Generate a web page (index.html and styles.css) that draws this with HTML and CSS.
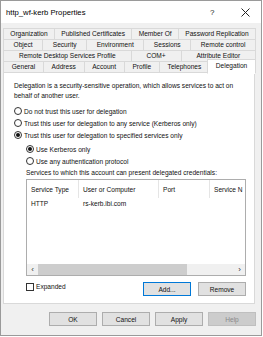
FILE: index.html
```html
<!DOCTYPE html>
<html>
<head>
<meta charset="utf-8">
<link rel="stylesheet" href="styles.css">
</head>
<body>
<div class="window">
  <div class="titlebar">
    <span class="title">http_wf-kerb Properties</span>
    <span class="tb-help">?</span>
    <span class="tb-close">
      <svg width="9" height="9" viewBox="0 0 9 9"><path d="M0.5 0.5L8.5 8.5M8.5 0.5L0.5 8.5" stroke="#222" stroke-width="1"/></svg>
    </span>
  </div>
  <div class="client">
    <div class="tabs">
      <div class="tabrow">
        <div class="tab">Organization</div>
        <div class="tab">Published Certificates</div>
        <div class="tab">Member Of</div>
        <div class="tab">Password Replication</div>
      </div>
      <div class="tabrow">
        <div class="tab">Object</div>
        <div class="tab">Security</div>
        <div class="tab">Environment</div>
        <div class="tab">Sessions</div>
        <div class="tab">Remote control</div>
      </div>
      <div class="tabrow">
        <div class="tab">Remote Desktop Services Profile</div>
        <div class="tab">COM+</div>
        <div class="tab">Attribute Editor</div>
      </div>
      <div class="tabrow last">
        <div class="tab">General</div>
        <div class="tab">Address</div>
        <div class="tab">Account</div>
        <div class="tab">Profile</div>
        <div class="tab">Telephones</div>
        <div class="tab selected">Delegation</div>
      </div>
    </div>
    <div class="panel">
      <p class="intro">Delegation is a security-sensitive operation, which allows services to act on behalf of another user.</p>
      <div class="radios">
        <div class="radio"><span class="rb"></span>Do not trust this user for delegation</div>
        <div class="radio"><span class="rb"></span>Trust this user for delegation to any service (Kerberos only)</div>
        <div class="radio"><span class="rb on"></span>Trust this user for delegation to specified services only</div>
      </div>
      <div class="sub">
        <div class="radios">
          <div class="radio"><span class="rb on"></span>Use Kerberos only</div>
          <div class="radio"><span class="rb"></span>Use any authentication protocol</div>
        </div>
        <div class="label">Services to which this account can present delegated credentials:</div>
        <div class="listbox">
          <div class="lhead">
            <div class="c1">Service Type</div>
            <div class="c2">User or Computer</div>
            <div class="c3">Port</div>
            <div class="c4">Service N</div>
          </div>
          <div class="lrow">
            <div class="c1">HTTP</div>
            <div class="c2">rs-kerb.ibi.com</div>
            <div class="c3"></div>
            <div class="c4"></div>
          </div>
          <div class="lspace"></div>
          <div class="hscroll">
            <span class="arr">&lsaquo;</span>
            <div class="track"><div class="thumb"></div></div>
            <span class="arr">&rsaquo;</span>
          </div>
        </div>
        <div class="below">
          <div class="check"><span class="cb"></span>Expanded</div>
          <div class="btns">
            <div class="btn default">Add...</div>
            <div class="btn">Remove</div>
          </div>
        </div>
      </div>
    </div>
    <div class="footer">
      <div class="btn">OK</div>
      <div class="btn">Cancel</div>
      <div class="btn">Apply</div>
      <div class="btn disabled">Help</div>
    </div>
  </div>
</div>
</body>
</html>
```

FILE: styles.css
```css
* { box-sizing: border-box; }
html, body { margin: 0; padding: 0; background: #fff; }
body {
  font-family: "Liberation Sans", Arial, sans-serif;
  font-size: 6.6px;
  color: #111;
  width: 263px;
  height: 337px;
  overflow: hidden;
}
.window {
  width: 262px;
  height: 336px;
  border: 1px solid #9a9a9a;
  background: #f0f0f0;
  display: flex;
  flex-direction: column;
}
.titlebar {
  height: 22px;
  background: #fff;
  display: flex;
  align-items: center;
  padding-left: 5px;
  flex: none;
}
.title { font-size: 7.7px; color: #000; flex: 1; }
.tb-help { font-size: 8px; width: 10px; margin-right: 21px; color: #222; }
.tb-close { width: 9px; height: 9px; margin-right: 11px; display: flex; }
.client {
  flex: 1;
  padding: 5px 6px 0 2px;
  display: flex;
  flex-direction: column;
}
.tabs { display: flex; flex-direction: column; }
.tabrow {
  display: flex;
  height: 12px;
  margin-bottom: -1px;
}
.tab {
  flex: 1 1 auto;
  border: 1px solid #d9d9d9;
  margin-right: -1px;
  background: #f0f0f0;
  text-align: center;
  line-height: 10px;
  white-space: nowrap;
  padding: 0 3px;
}
.tab.selected {
  background: #fff;
  border-bottom-color: #fff;
  margin: -2px -1px 0 -2px;
  height: 15px;
  position: relative;
  z-index: 2;
  line-height: 12px;
}
.panel {
  background: #fff;
  border: 1px solid #d9d9d9;
  height: 232px;
  padding: 8px 0 0 10px;
  flex: none;
}
.intro {
  margin: 0;
  line-height: 10px;
  width: 236px;
}
.radios { display: flex; flex-direction: column; }
.panel > .radios { margin-top: 4px; }
.radio {
  height: 12px;
  display: flex;
  align-items: center;
  white-space: nowrap;
}
.rb {
  width: 8px;
  height: 8px;
  border: 1px solid #333;
  border-radius: 50%;
  margin-right: 2px;
  display: flex;
  align-items: center;
  justify-content: center;
  flex: none;
}
.rb.on::after {
  content: "";
  width: 4px;
  height: 4px;
  border-radius: 50%;
  background: #111;
}
.sub { padding-left: 12px; margin-top: 2px; }
.label { height: 12px; line-height: 12px; white-space: nowrap; }
.listbox {
  width: 220px;
  height: 97px;
  border: 1px solid #adadad;
  display: flex;
  flex-direction: column;
}
.lhead, .lrow { display: flex; flex: none; }
.lhead { height: 18px; align-items: stretch; }
.lhead > div {
  border-right: 1px solid #e5e5e5;
  padding: 0 0 0 4px;
  display: flex;
  align-items: center;
  white-space: nowrap;
  overflow: hidden;
}
.lrow { height: 10px; align-items: center; }
.lrow > div { padding-left: 4px; white-space: nowrap; }
.c1 { width: 52px; }
.c2 { width: 80px; }
.c3 { width: 51px; }
.c4 { flex: 1; }
.lhead > .c4 { border-right: none; }
.lspace { flex: 1; }
.hscroll {
  height: 11px;
  background: #f0f0f0;
  display: flex;
  align-items: center;
  flex: none;
}
.arr { width: 11px; text-align: center; font-size: 8px; line-height: 11px; color: #333; }
.track { flex: 1; height: 100%; display: flex; }
.thumb { width: 149px; height: 100%; background: #cdcdcd; }
.below {
  display: flex;
  justify-content: space-between;
  align-items: flex-start;
  margin-top: 6px;
  width: 220px;
}
.check { display: flex; align-items: center; height: 9px; }
.cb {
  width: 8px;
  height: 8px;
  border: 1px solid #333;
  background: #fff;
  margin-right: 2px;
}
.btns { display: flex; gap: 7px; }
.btn {
  width: 48px;
  height: 14px;
  border: 1px solid #adadad;
  background: #e1e1e1;
  display: flex;
  align-items: center;
  justify-content: center;
}
.btn.default { border-color: #0078d7; }
.btn.disabled { background: #cccccc; border-color: #bfbfbf; color: #8a8a8a; }
.footer {
  display: flex;
  justify-content: flex-end;
  gap: 5px;
  margin-top: 8px;
  margin-right: -1px;
}
```
